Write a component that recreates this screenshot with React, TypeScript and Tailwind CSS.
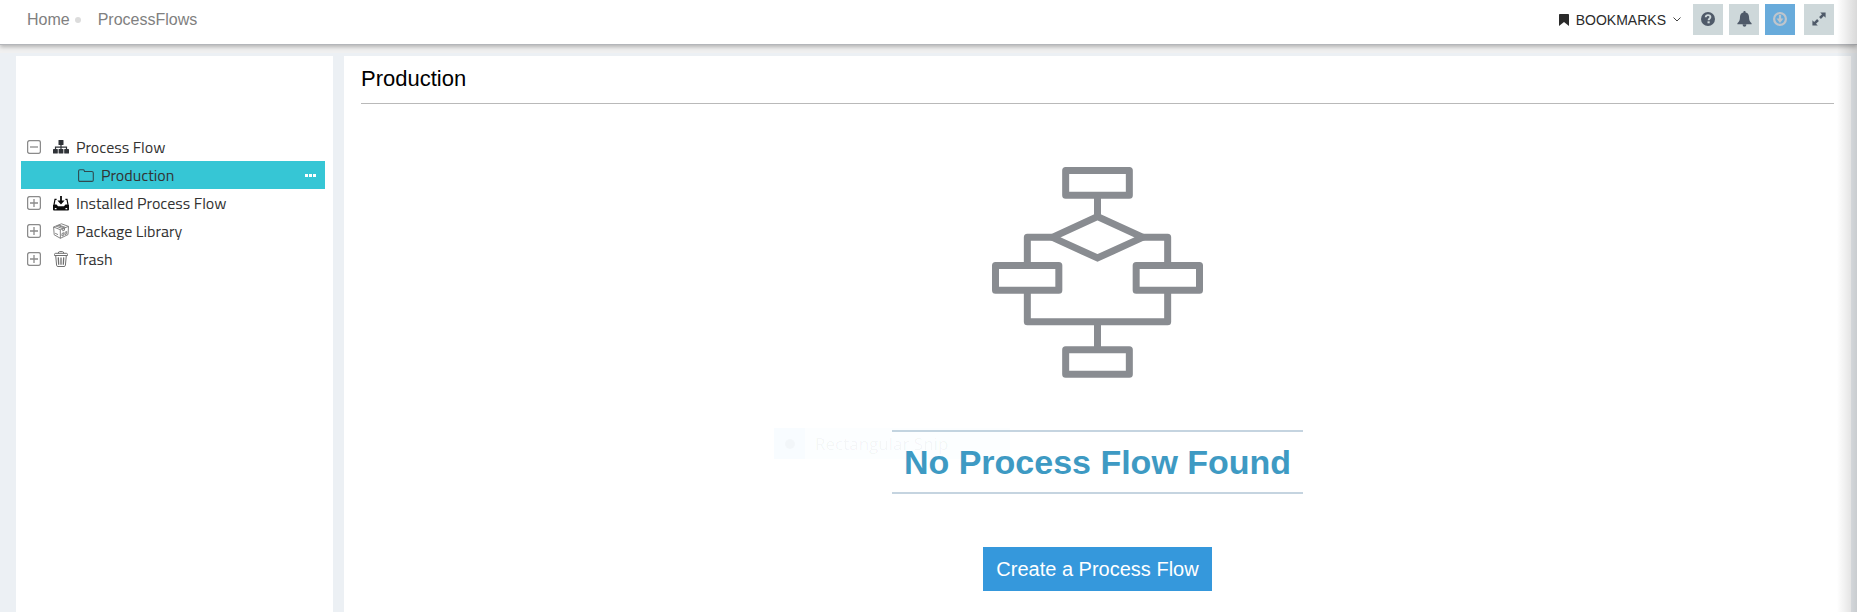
import type { ReactNode } from 'react';

function HelpIcon() {
  return (
    <svg viewBox="0 0 14 14" className="size-3.5" aria-hidden="true">
      <circle cx="7" cy="7" r="7" fill="#4f5a69" />
      <path d="M4.7 5.2C4.8 3.8 5.7 3.1 7 3.1s2.4.8 2.4 2c0 1.700-1.800 1.700-1.800 3.100" fill="none" stroke="#ced8da" strokeWidth="1.9" />
      <rect x="6.500" y="9.300" width="2.200" height="2" fill="#ced8da" />
    </svg>
  );
}

function BellIcon() {
  return (
    <svg viewBox="0 0 15 16" className="h-4 w-[15px]" fill="#4f5a69" aria-hidden="true">
      <path d="M7.500 0c.7 0 1.200.5 1.100 1.400C10.900 1.900 12 3.700 12 5.800c0 3.300.8 5 2.600 6.400v1H.4v-1C2.200 10.800 3 9.100 3 5.800c0-2.100 1.100-3.900 3.400-4.400C6.300.5 6.800 0 7.500 0z" />
      <path d="M5.600 13.200h3.800C9.300 15 8.500 15.700 7.500 15.700S5.700 15 5.600 13.200z" />
    </svg>
  );
}

function DownloadIcon() {
  return (
    <svg viewBox="0 0 14 14" className="size-3.5" fill="none" stroke="#bfc5cc" strokeWidth="2.200" aria-hidden="true">
      <circle cx="7" cy="7" r="5.900" />
      <path d="M7 3v6" />
      <path d="M3.500 6.600h7L7 10.900z" fill="#bfc5cc" stroke="none" />
    </svg>
  );
}

function ExpandIcon() {
  return (
    <svg viewBox="0 0 14 14" className="size-3.5" fill="#4f5a69" aria-hidden="true">
      <path d="M8.200.4h5.400v5.400l-1.800-1.800-2.900 2.900-1.800-1.800L10 2.200zM5.800 13.600H.4V8.200l1.800 1.800 2.900-2.900 1.800 1.800L4 11.800z" />
    </svg>
  );
}

function BookmarkIcon() {
  return (
    <svg viewBox="0 0 10 12" className="h-3 w-2.5" fill="#2b2b2b" aria-hidden="true">
      <path d="M0 .8Q0 0 .8 0h8.400Q10 0 10 .8V12L5 8 0 12z" />
    </svg>
  );
}

function SitemapIcon() {
  return (
    <svg viewBox="0 0 16 14" className="h-3.5 w-4" fill="#2f3338" aria-hidden="true">
      <rect x="5.500" y="0" width="5" height="5" rx=".6" />
      <path d="M8 4.500v5M2.500 10V7.200h11V10" fill="none" stroke="#2f3338" strokeWidth="1.200" />
      <rect x="0" y="9" width="4.800" height="4.500" rx=".6" />
      <rect x="5.600" y="9" width="4.800" height="4.500" rx=".6" />
      <rect x="11.200" y="9" width="4.800" height="4.500" rx=".6" />
    </svg>
  );
}

function InstalledIcon() {
  return (
    <svg viewBox="0 0 16 15" className="h-[15px] w-4" fill="#0c0c0c" aria-hidden="true">
      <path d="M7.100 0h1.800v4.600h2.700L8 8.400 4.400 4.600h2.700z" />
      <path d="M3.600 3.300H2L1 8.800M12.400 3.300H14l1 5.500" stroke="#0c0c0c" strokeWidth="1.200" fill="none" />
      <path d="M0 9.300Q0 8.500 1 8.500h2.500l1.500 1.700h6l1.500-1.700H15q1 0 1 .8v4.200q0 1-1 1H1q-1 0-1-1z" />
      <path d="M1.800 12.600h1.700M12.500 12.600h1.700" stroke="#fff" strokeWidth="1.100" />
    </svg>
  );
}

function PackageIcon() {
  return (
    <svg viewBox="0 0 16 16" className="size-4" fill="none" stroke="#777" strokeWidth=".9" aria-hidden="true">
      <path d="M.6 4 8.500.8l7 2.600-.5 8.200-7.600 3.700L1.200 11.800zM.6 4l6.700 2.700 8.200-3.300M7.300 6.700l.1 8.600" strokeLinejoin="round" />
      <path d="m3 3.100 6.800 2.600v2.200l1.700-.7V5L4.800 2.400M5.800 2l6.900 2.500" />
      <path d="m9 10.500 1.800-.8v2.500L9 13zM12 9.300l1.700-.8v2.300l-1.700.8zM2.200 10.300l2.800 1.300" />
    </svg>
  );
}

function TrashIcon() {
  return (
    <svg viewBox="0 0 14 16" className="h-4 w-3.5" fill="none" stroke="#6f6f6f" strokeWidth="1" aria-hidden="true">
      <path d="M.5 4.500v-1q0-1.200 1.200-1.200h10.600q1.200 0 1.200 1.200v1zM4.300 2.300Q4.300.6 5.600.6h2.800q1.300 0 1.300 1.700" />
      <path d="m1.700 4.600.9 9.700q.1 1.200 1.300 1.200h6.200q1.200 0 1.300-1.200l.9-9.700" />
      <path d="m4.300 6.400.4 7.300M7 6.400v7.300M9.700 6.400l-.4 7.300" strokeWidth="1.300" />
    </svg>
  );
}

function FolderIcon() {
  return (
    <svg viewBox="0 0 16 13" className="h-[13px] w-4" fill="none" stroke="#2f4a50" strokeWidth="1.100" aria-hidden="true">
      <path d="M.6 11V2Q.6.7 1.900.7h3.200q1 0 1.200 1l.2.8h7.300q1.500 0 1.500 1.400V11q0 1.400-1.400 1.400H2Q.6 12.400.6 11z" />
    </svg>
  );
}

function ToggleIcon({ open }: { open: boolean }) {
  return (
    <svg viewBox="0 0 14 14" className="size-3.5" fill="none" stroke="#8b8b8b" aria-hidden="true">
      <rect x=".6" y=".6" width="12.800" height="12.800" rx="2" strokeWidth="1.300" />
      <path d={open ? 'M3 7h8' : 'M3 7h8M7 3v8'} strokeWidth="1.300" />
    </svg>
  );
}

function FlowchartArt() {
  return (
    <svg viewBox="66 51 633 633" className="size-[211px]" fill="none" stroke="#898c91" strokeWidth="21" strokeLinejoin="round" aria-hidden="true">
      <rect x="287" y="61.500" width="191" height="74" />
      <rect x="76.500" y="346.500" width="190" height="74" />
      <rect x="498.500" y="346.500" width="190" height="74" />
      <rect x="287" y="599" width="191" height="74" />
      <path d="m247 262 135.500-62L518 262l-135.500 62z" strokeLinejoin="miter" />
      <path d="M382.500 136v64M247 262h-75v84M518 262h75v84M172 421v94h421v-94M382.500 515v84" />
    </svg>
  );
}

function ToolButton({ label, tone, children }: { label: string; tone: string; children: ReactNode }) {
  return (
    <button type="button" aria-label={label} className={`flex h-[31px] w-[30px] items-center justify-center pb-0.5 ${tone}`}>
      {children}
    </button>
  );
}

function TreeRow({ label, icon, open = false }: { label: string; icon: ReactNode; open?: boolean }) {
  return (
    <div className="flex h-7 items-center pl-[6px]">
      <button type="button" aria-label={`Toggle ${label}`} className="mr-3 flex">
        <ToggleIcon open={open} />
      </button>
      <a href="#" className="flex items-center gap-[7px]">
        <span className="flex w-4 justify-center">{icon}</span>
        {label}
      </a>
    </div>
  );
}

export default function App() {
  return (
    <div className="relative flex min-h-screen flex-col overflow-hidden bg-[#ecf0f4] font-['Liberation_Sans',Arial,sans-serif]">
      <header className="relative flex h-[45px] items-start justify-between border-b border-[#b4b6ba] bg-white pr-[23px] pl-[27px] shadow-[0_2px_4px_rgba(0,0,0,0.25),0_8px_0_#f0f0f0]">
        <nav aria-label="Breadcrumb" className="flex h-[39px] items-center text-base text-[#808080]">
          <a href="#">Home</a>
          <span className="mr-[17px] ml-[5px] size-1.5 rounded-full bg-[#dcdcdc]" />
          <a href="#">ProcessFlows</a>
        </nav>
        <div className="flex pt-1">
          <button type="button" className="mr-3 flex h-[31px] items-center text-sm text-[#2b2b2b]">
            <BookmarkIcon />
            <span className="mr-[7px] ml-[7px]">BOOKMARKS</span>
            <svg viewBox="0 0 8 5" className="h-[5px] w-2" fill="none" stroke="#444" aria-hidden="true">
              <path d="m.5.5 3.500 3.500L7.500.5" />
            </svg>
          </button>
          <div className="mr-[9px] flex gap-1.5">
            <ToolButton label="Help" tone="bg-[#ced8da]"><HelpIcon /></ToolButton>
            <ToolButton label="Notifications" tone="bg-[#ced8da]"><BellIcon /></ToolButton>
            <ToolButton label="Downloads" tone="bg-[#68abdb]"><DownloadIcon /></ToolButton>
          </div>
          <ToolButton label="Full screen" tone="bg-[#ced8da]"><ExpandIcon /></ToolButton>
        </div>
      </header>

      <div className="flex flex-1 gap-[11px] pt-[11px] pr-1.5 pl-4">
        <aside className="w-[317px] shrink-0 bg-white px-[5px] pt-[77px] font-['Titillium_Web',Roboto,sans-serif] text-base text-[#333]">
          <TreeRow label="Process Flow" icon={<SitemapIcon />} open />
          <div className="mr-[3px] flex h-7 items-center justify-between bg-[#36c6d5] pr-[9px] pl-[57px]">
            <a href="#" className="flex items-center gap-[7px]">
              <FolderIcon />
              Production
            </a>
            <button type="button" aria-label="More actions" className="flex gap-px">
              <span className="size-[3px] bg-white" />
              <span className="size-[3px] bg-white" />
              <span className="size-[3px] bg-white" />
            </button>
          </div>
          <TreeRow label="Installed Process Flow" icon={<InstalledIcon />} />
          <TreeRow label="Package Library" icon={<PackageIcon />} />
          <TreeRow label="Trash" icon={<TrashIcon />} />
        </aside>

        <main className="flex min-w-0 flex-1 flex-col bg-white px-[17px]">
          <h1 className="h-12 border-b border-[#b9b9b9] pt-[7px] text-[22px] leading-8 text-black">Production</h1>
          <div className="flex flex-col items-center pt-[63px]">
            <FlowchartArt />
            <h2 className="mt-[52px] border-y-2 border-[#c5d4e0] px-3 text-[34px] leading-[60px] font-bold text-[#3e9ac3]">No Process Flow Found</h2>
            <button type="button" className="mt-[53px] h-11 bg-[#3598dc] px-[13px] text-xl text-white">Create a Process Flow</button>
          </div>
        </main>
      </div>

      <div className="pointer-events-none absolute top-[428px] left-[774px] flex h-[31px] w-[236px] items-center bg-[#0080ff]/[0.012] font-['Open_Sans',sans-serif] text-[17px] text-black/[0.045]">
        <span className="mr-[10px] flex h-full w-[31px] items-center justify-center bg-[#0080ff]/[0.015]">
          <span className="size-2.5 rounded-full bg-black/[0.025]" />
        </span>
        Rectangular Snip
      </div>
      <div className="pointer-events-none absolute inset-y-0 right-0 w-5 bg-linear-to-l from-black/15 to-transparent" />
    </div>
  );
}
